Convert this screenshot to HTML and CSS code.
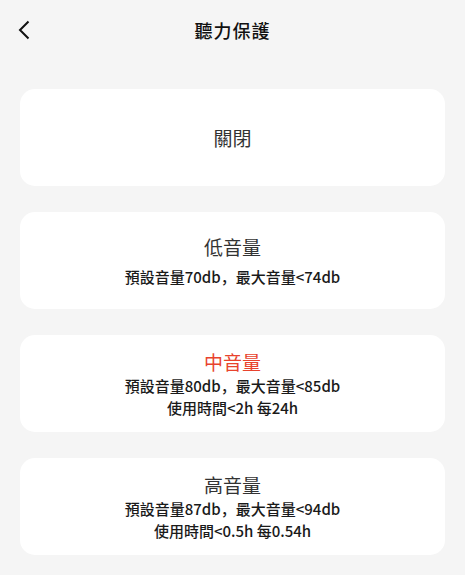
FILE: index.html
```html
<!DOCTYPE html>
<html lang="zh-Hant">
<head>
    <meta charset="UTF-8">
    <title>聽力保護</title>
    <link rel="stylesheet" href="styles.css">
</head>
<body>
<div class="page">
    <div class="header">
        <div class="back">
            <svg width="14" height="20" viewBox="0 0 14 20">
                <path d="M11.5 1.5 L3 10 L11.5 18.5" fill="none" stroke="#111" stroke-width="2"/>
            </svg>
        </div>
        <div class="title">聽力保護</div>
    </div>
    <div class="list">
        <div class="item">
            <div class="name">關閉</div>
        </div>
        <div class="item loose">
            <div class="name">低音量</div>
            <div class="desc">預設音量70db<span class="comma" lang="zh-Hans">，</span>最大音量&lt;74db</div>
        </div>
        <div class="item active">
            <div class="name">中音量</div>
            <div class="desc">預設音量80db<span class="comma" lang="zh-Hans">，</span>最大音量&lt;85db</div>
            <div class="desc">使用時間&lt;2h 每24h</div>
        </div>
        <div class="item">
            <div class="name">高音量</div>
            <div class="desc">預設音量87db<span class="comma" lang="zh-Hans">，</span>最大音量&lt;94db</div>
            <div class="desc">使用時間&lt;0.5h 每0.54h</div>
        </div>
    </div>
</div>
</body>
</html>
```

FILE: styles.css
```css
html, body{
    margin: 0;
    padding: 0;
}
body{
    background: #f5f5f5;
    font-family: "Noto Sans CJK TC", "Noto Sans", sans-serif;
    color: #222;
}
.page{
    width: 465px;
    height: 575px;
    overflow: hidden;
}
.header{
    position: relative;
    height: 60px;
    display: flex;
    align-items: center;
    justify-content: center;
}
.back{
    position: absolute;
    left: 17px;
    top: 20px;
    width: 14px;
    height: 20px;
}
.back svg{
    display: block;
}
.title{
    font-size: 18px;
    font-weight: 500;
    color: #111;
    letter-spacing: 1px;
}
.list{
    padding: 29px 20px 0;
    display: flex;
    flex-direction: column;
    gap: 26px;
}
.item{
    height: 97px;
    background: #fff;
    border-radius: 15px;
    display: flex;
    flex-direction: column;
    align-items: center;
    justify-content: center;
}
.name{
    font-size: 19px;
    line-height: 25px;
    color: #333;
    margin-bottom: 1px;
}
.loose .name{
    margin-bottom: 7px;
}
.desc{
    font-size: 15px;
    line-height: 22px;
    font-weight: 500;
    color: #1a1a1a;
}
.comma{
    font-family: "Noto Sans CJK SC", sans-serif;
}
.active .name{
    color: #e8432d;
}
```
